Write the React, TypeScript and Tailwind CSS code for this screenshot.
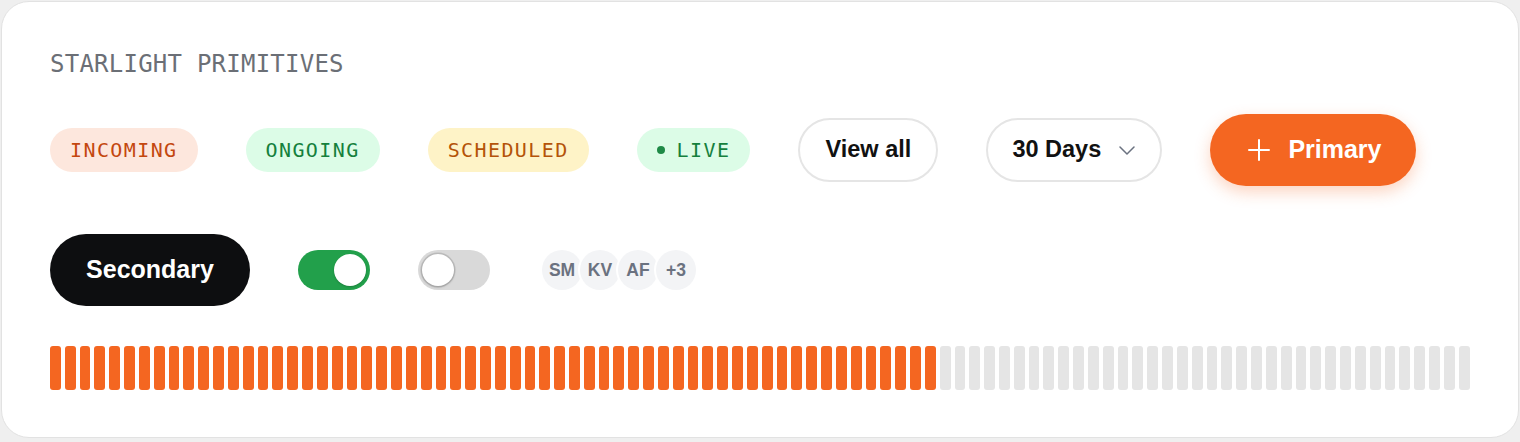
import React from "react";

const mono = { fontFamily: '"DejaVu Sans Mono", "Liberation Mono", monospace' };

const badges = [
  { label: "INCOMING", cls: "bg-[#fde7dd] text-[#c4470f]" },
  { label: "ONGOING", cls: "bg-[#dcfce7] text-[#15803d]" },
  { label: "SCHEDULED", cls: "bg-[#fef3c7] text-[#b45309]" },
];

const avatars = ["SM", "KV", "AF", "+3"];

const TOTAL_BARS = 96;
const FILLED_BARS = 60;

function Badge({ children, className }: { children: React.ReactNode; className: string }) {
  return (
    <span
      style={mono}
      className={`flex h-11 items-center gap-3 rounded-full px-5 text-[20px] tracking-[0.07em] ${className}`}
    >
      {children}
    </span>
  );
}

function Toggle({ on }: { on: boolean }) {
  return (
    <div
      className={`flex h-10 w-[72px] items-center rounded-full p-1 ${
        on ? "justify-end bg-[#22a04b]" : "justify-start bg-[#d9d9d9]"
      }`}
    >
      <div
        className={`h-8 w-8 rounded-full bg-white ${
          on ? "shadow-[0_1px_2px_rgba(0,0,0,0.2)]" : "shadow-[0_0_0_1.5px_rgba(0,0,0,0.12),0_1px_3px_rgba(0,0,0,0.2)]"
        }`}
      />
    </div>
  );
}

export default function App() {
  return (
    <div
      className="h-[442px] w-[1520px] bg-[#efefef] px-px pt-px"
      style={{ fontFamily: '"Liberation Sans", Arial, sans-serif' }}
    >
      <div className="h-[437px] rounded-[28px] border border-[#e2e2e2] bg-white px-12 pt-[46px]">
        <h2 style={mono} className="text-[24px] leading-8 tracking-[0.01em] text-[#6b6f76]">
          STARLIGHT PRIMITIVES
        </h2>

        <div className="mt-[34px] flex items-center gap-12">
          {badges.map((b) => (
            <Badge key={b.label} className={b.cls}>
              {b.label}
            </Badge>
          ))}
          <Badge className="bg-[#dcfce7] text-[#15803d]">
            <span className="h-2 w-2 rounded-full bg-[#1f8a47]" />
            LIVE
          </Badge>

          <button className="h-16 w-[140px] rounded-full border-2 border-[#e5e5e5] bg-white text-[23.5px] font-bold text-[#111]">
            View all
          </button>

          <button className="flex h-16 w-[176px] items-center gap-[18px] rounded-full border-2 border-[#e5e5e5] bg-white pl-6 text-[23.5px] font-bold text-[#111]">
            30 Days
            <svg width="16" height="9" viewBox="0 0 16 9" fill="none">
              <path d="M1 1l7 7 7-7" stroke="#6b7280" strokeWidth="1.5" strokeLinecap="round" strokeLinejoin="round" />
            </svg>
          </button>

          <button className="flex h-[72px] w-[206px] items-center gap-[18px] rounded-full bg-[#f46621] pl-[38px] text-[25px] font-bold text-white shadow-[0_6px_16px_rgba(244,102,33,0.28)]">
            <svg width="22" height="22" viewBox="0 0 22 22" fill="none">
              <path d="M11 1v20M1 11h20" stroke="white" strokeWidth="2" strokeLinecap="round" />
            </svg>
            Primary
          </button>
        </div>

        <div className="mt-12 flex items-center gap-12">
          <button className="h-[72px] w-[200px] rounded-full bg-[#0d0e10] text-[25px] font-bold text-white">
            Secondary
          </button>
          <Toggle on />
          <Toggle on={false} />
          <div className="flex items-center pl-1">
            {avatars.map((a, i) => (
              <div
                key={a}
                className={`flex h-10 w-10 items-center justify-center rounded-full bg-[#f3f4f6] text-[17.5px] font-bold text-[#6b7280] ring-2 ring-white ${
                  i > 0 ? "-ml-[2px]" : ""
                }`}
              >
                {a}
              </div>
            ))}
          </div>
        </div>

        <div className="mt-10 flex gap-1">
          {Array.from({ length: TOTAL_BARS }, (_, i) => (
            <div
              key={i}
              className={`h-11 flex-1 rounded-[3px] ${i < FILLED_BARS ? "bg-[#f46621]" : "bg-[#e5e5e5]"}`}
            />
          ))}
        </div>
      </div>
    </div>
  );
}
